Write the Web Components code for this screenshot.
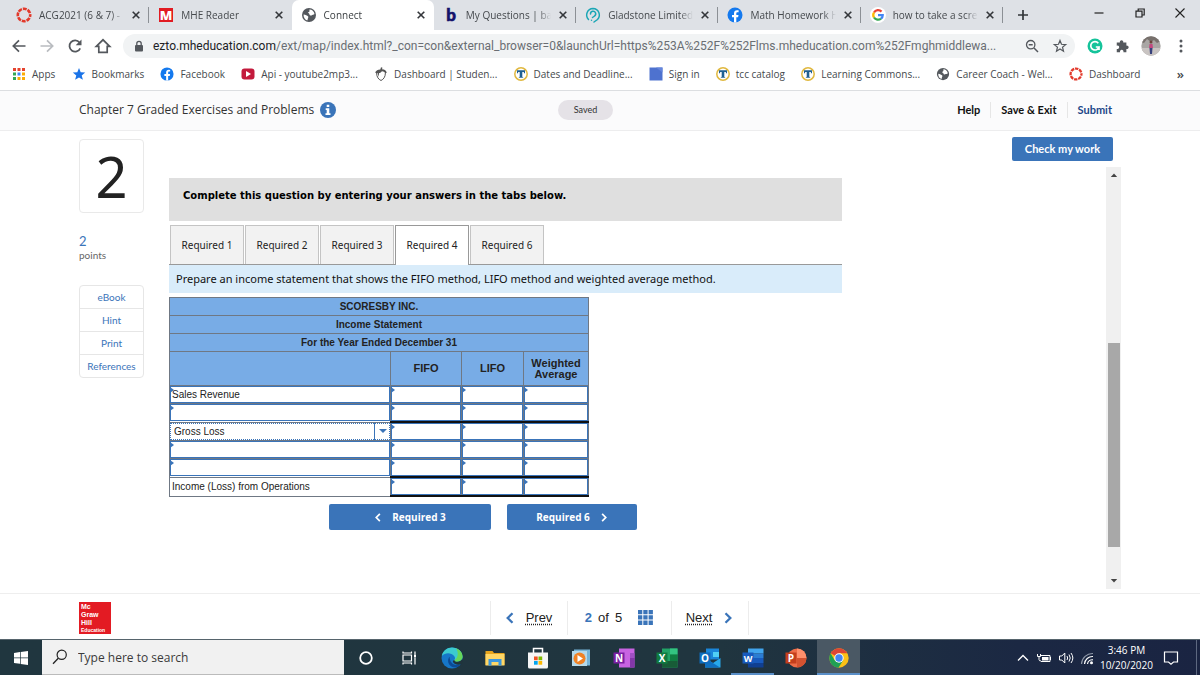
<!DOCTYPE html>
<html lang="en">
<head>
<meta charset="utf-8">
<title>Connect</title>
<style>
  html, body { margin: 0; height: 100%; }
  body {
    background: #fff;
    color: #222;
    font-family: "Open Sans", "Noto Sans", sans-serif;
    --blue: #3a74b9;
    --ui: "Open Sans", "Noto Sans", sans-serif;
    --brand: Lato, "Open Sans", sans-serif;
    --sheet: "Liberation Sans", Arial, sans-serif;
  }
</style>
</head>
<body>
<browser-window></browser-window>

<script>
const ICONS = {
  canvas: ['0 0 16 16', '<circle cx="8" cy="8" r="6.2" fill="none" stroke="#e2392b" stroke-width="2.6" stroke-dasharray="3.9 .97" stroke-dashoffset="1.9"/>'],
  mhe: ['0 0 16 16', '<path fill="#e11b22" d="M1 1h14v14H1z"/><text x="8" y="13" text-anchor="middle" font-family="Open Sans" font-weight="800" font-size="13" fill="#fff">M</text>'],
  globe: ['0 0 16 16', '<circle cx="8" cy="8" r="7" fill="#54585d"/><path fill="#fff" d="M2.6 7.6c2 .3 3.500 1 4.600 2 .4 1.200-.5 1.700-.4 2.500l-.5 1.500C4 13 2.300 10.500 2.600 7.600zM8.500 2.500c2.500 0 4.700 2 5 4.600-.8 1.200-2.200.6-3 1.300-.9.500-1.900-.2-2-1-.1-.8-1.300-.6-1.600-1.300-.2-.9 1.200-.9 1.500-1.600.3-.7-.2-1.300.1-2z"/>'],
  bartleby: ['0 0 16 16', '<text x="8" y="14" text-anchor="middle" font-family="Lato" font-weight="900" font-size="17" fill="#14126b" stroke="#14126b" stroke-width=".6">b</text>'],
  gladstone: ['0 0 16 16', '<g fill="none" stroke="#1ba6b5" stroke-width="1.500" stroke-linecap="round"><path d="M3.500 12.500A6.500 6.500 0 0 1 8 1.500a6.500 6.500 0 0 1 4.500 11L9 15"/><path d="M5.500 7A2.600 2.600 0 1 1 9.500 9L7.500 10.500"/><path d="M6.500 13.200v.1"/></g>'],
  facebook: ['0 0 16 16', '<circle cx="8" cy="8" r="7.500" fill="#1479ee"/><path fill="#fff" d="M7 15.400V10.200H5V8h2V6.300c0-2 1.200-3.100 3-3.100l1.600.1v1.900h-1c-1 0-1.300.6-1.300 1.200V8h2.200l-.4 2.200H9.300v5.200z"/>'],
  google: ['0 0 16 16', '<circle cx="8" cy="8" r="8" fill="#fff"/><g fill="none" stroke-width="2.300"><path stroke="#ea4335" d="M4 5.500A4.700 4.700 0 0 1 11.500 4.600"/><path stroke="#fbbc05" d="M4 5.500a4.800 4.800 0 0 0 0 5"/><path stroke="#34a853" d="M4 10.500a4.700 4.700 0 0 0 7 1.100"/><path stroke="#4285f4" d="M8 8.200h4.700c0 1.400-.6 2.600-1.700 3.400"/></g>'],
  apps: ['0 0 14 14', '<path fill="#e5432e" d="M1 1h3v3H1zM5.500 1h3v3h-3zM10 1h3v3h-3z"/><path fill="#34a853" d="M1 5.500h3v3H1zM1 10h3v3H1z"/><path fill="#4285f4" d="M5.500 5.500h3v3h-3z"/><path fill="#fbab04" d="M10 5.500h3v3h-3zM5.500 10h3v3h-3zM10 10h3v3h-3z"/>'],
  starfill: ['0 0 14 14', '<path fill="#1a73e8" d="M7 1l1.700 4.200 4.500.3-3.500 2.900 1.200 4.400L7 10.400l-3.900 2.400 1.200-4.400L.8 5.500l4.500-.3z"/>'],
  youtube: ['0 0 14 14', '<rect x=".5" y="1.500" width="13" height="11" rx="3" fill="#c31a3c"/><path fill="#fff" d="M5 4v6l5-3z"/>'],
  acorn: ['0 0 14 14', '<path fill="#555" d="M6.300 2.500L7 .3l1.500.5-.5 1.500c2.600.2 4.600 1.400 4.700 3.700H11c-.5-1-1.500-1.600-3-1.700L6 6H1.300C1.400 3.700 3.700 2.500 6.300 2.500z"/><path fill="none" stroke="#555" d="M2.600 6c.1 4 1.800 6.300 4.400 7.500 2.600-1.200 4.300-3.500 4.400-7.500"/><path fill="#555" d="M3 3.700l1.500 6 1-6z"/>'],
  tcc: ['0 0 14 14', '<circle cx="7" cy="7" r="6.200" fill="#fff" stroke="#e0b83f" stroke-width="1.500"/><path fill="#1f5f91" d="M3 3.200h8v3H9.900V5.100H8.300v4.600l1.200 1.100h-5l1.200-1.100V5.100H4.100v1.100H3z"/>'],
  square: ['0 0 14 14', '<path fill="#4e72cf" d="M.5.500h13v13H.5z"/><path fill="#6585db" d="M7 .5h6.500v5z"/>'],
  back: ['0 0 16 16', '<path fill="none" stroke="#54585d" stroke-width="1.700" d="M14.500 8H2.500M8 2.300L2.300 8 8 13.700"/>'],
  forward: ['0 0 16 16', '<path fill="none" stroke="#b9bcc0" stroke-width="1.700" d="M1.500 8h12M8 2.300L13.700 8 8 13.700"/>'],
  reload: ['0 0 16 16', '<path fill="none" stroke="#54585d" stroke-width="1.800" d="M13.200 10.300A5.600 5.600 0 1 1 12.500 4.500"/><path fill="#54585d" d="M14.500 1.500v5.800H8.700z"/>'],
  home: ['0 0 16 16', '<path fill="none" stroke="#54585d" stroke-width="1.700" d="M1.300 8.300L8 1.800l6.700 6.500h-2.500v6H3.800v-6z"/>'],
  lock: ['0 0 12 12', '<rect x="2" y="5" width="8" height="6.500" rx="1" fill="#54585d"/><path fill="none" stroke="#54585d" stroke-width="1.300" d="M3.800 5V3.500a2.200 2.200 0 0 1 4.400 0V5"/>'],
  zoomout: ['0 0 14 14', '<circle cx="5.700" cy="5.700" r="4.200" fill="none" stroke="#54585d" stroke-width="1.300"/><path stroke="#54585d" stroke-width="1.500" d="M9 9l4 4M3.700 5.700h4"/>'],
  star: ['0 0 14 14', '<path fill="none" stroke="#54585d" stroke-width="1.200" d="M7 1.500l1.500 3.800 4.200.3-3.200 2.600 1 4L7 10l-3.500 2.200 1-4L1.300 5.600l4.200-.3z"/>'],
  grammarly: ['0 0 16 16', '<circle cx="8" cy="8" r="7.500" fill="#15c39a"/><path fill="none" stroke="#fff" stroke-width="1.700" d="M11.300 5.200A4.200 4.200 0 1 0 12 9H8.800M12 9v3"/>'],
  puzzle: ['0 0 16 16', '<path fill="#54585d" d="M2 4h3.600a2 2 0 1 1 3.800 0H13v3.600a2 2 0 1 1 0 3.800V15H9.600a2 2 0 1 0-3.800 0H2v-3.700a2 2 0 1 0 0-3.700z"/>'],
  avatar: ['0 0 20 20', '<defs><clipPath id="c"><circle cx="10" cy="10" r="9.700"/></clipPath></defs><g clip-path="url(#c)"><path fill="#a9a6a4" d="M0 0h20v20H0z"/><path fill="#77706c" d="M0 0h20v5l-4 2-3-3-3 2-4-3-3 4-3-1z"/><path fill="#c9c4c2" d="M0 12h20v8H0z"/><circle cx="10" cy="6" r="1.500" fill="#6b443a"/><path fill="#c2497e" d="M8.500 8h3l.5 4H8z"/><path fill="#38427c" d="M8.500 12h3l-.5 6H9z"/></g>'],
  dots: ['0 0 16 16', '<g fill="#54585d"><circle cx="8" cy="3" r="1.500"/><circle cx="8" cy="8" r="1.500"/><circle cx="8" cy="13" r="1.500"/></g>'],
  close: ['0 0 10 10', '<path stroke="#33363a" stroke-width="1.600" d="M1.700 1.700l6.600 6.600M8.300 1.700L1.700 8.300"/>'],
  plus: ['0 0 12 12', '<path stroke="#33363a" stroke-width="1.700" d="M6 1v10M1 6h10"/>'],
  min: ['0 0 12 12', '<path stroke="#222" stroke-width="1.200" d="M1.500 6h9"/>'],
  restore: ['0 0 12 12', '<path fill="none" stroke="#222" stroke-width="1.200" d="M2 4.200h6V10H2zM4.200 4V2h6v6H8"/>'],
  winclose: ['0 0 12 12', '<path stroke="#222" stroke-width="1.100" d="M1.500 1.500l9 9M10.500 1.500l-9 9"/>'],
  info: ['0 0 16 16', '<circle cx="8" cy="8" r="8" fill="#3a74b9"/><path fill="#fff" d="M6.700 2.700h2.600v2.300H6.700zM5.700 6.300h3.600v4.900h1.200V13H5.500v-1.800h1.200V8h-1z"/>'],
  left: ['0 0 10 12', '<path fill="none" stroke="currentColor" stroke-width="2.300" d="M7.500 1.300L2.700 6l4.800 4.700"/>'],
  right: ['0 0 10 12', '<path fill="none" stroke="currentColor" stroke-width="2.300" d="M2.500 1.300L7.300 6l-4.800 4.700"/>'],
  grid: ['0 0 15 15', '<path fill="#3a74b9" d="M0 0h4.300v4.300H0zM5.300 0h4.300v4.300H5.300zM10.600 0h4.300v4.300h-4.300zM0 5.300h4.300v4.300H0zM5.300 5.300h4.300v4.300H5.300zM10.600 5.300h4.300v4.300h-4.300zM0 10.600h4.300v4.300H0zM5.300 10.600h4.300v4.300H5.300zM10.600 10.600h4.300v4.300h-4.300z"/>'],
  up: ['0 0 8 8', '<path fill="#444" d="M0.800 6L4 2.500 7.200 6z"/>'],
  down: ['0 0 8 8', '<path fill="#444" d="M0.800 2L4 5.500 7.200 2z"/>'],
  windows: ['0 0 16 16', '<path fill="#fff" d="M1 3l6-.9v5.500H1zM7.700 2L15 1v6.600H7.700zM1 8.300h6v5.500L1 13zM7.700 8.300H15V15l-7.300-1z"/>'],
  search: ['0 0 16 16', '<circle cx="9.700" cy="5.800" r="4.600" fill="none" stroke="#222" stroke-width="1.200"/><path stroke="#222" stroke-width="1.300" d="M6.300 9.200L1 14.700"/>'],
  cortana: ['0 0 16 16', '<circle cx="8" cy="8" r="5.800" fill="none" stroke="#fff" stroke-width="1.800"/>'],
  taskview: ['0 0 16 16', '<g fill="none" stroke="#fff" stroke-width="1.200"><path d="M2 5h8.500v6H2zM2 1.500v1.500h8.500V1.500M2 14.500V13h8.500v1.500M14 1.500V5M14 8v6.500"/></g><path fill="#fff" d="M13 5h2v2.500h-2z"/>'],
  edge: ['0 0 22 22', '<circle cx="11" cy="11" r="10.500" fill="#1677c9"/><path fill="#3ccbd0" d="M.8 9C2 3.500 6.200.5 11 .5c6 0 10.500 4.300 10.500 9 0 3.200-2.300 5.200-5 5.200-2.100 0-3.500-.8-3-1.800.7-1.200.7-2.700-.4-4C10 5.500 4 5.500.8 9z"/><path fill="#66d65a" d="M15 1.300c4 1.500 6.500 4.800 6.500 8.200 0 3.200-2.300 5.200-5 5.200-2.100 0-3.500-.8-3-1.800C17 11 18 6 15 1.300z"/><path fill="#0c4a94" d="M8.700 9.700c-3.500 3.300-1 9.500 4 10.600 2.500.5 5.500-.6 7.200-3-3.500 1.500-7 .8-9-1.300-1.600-1.700-2.400-4-2.200-6.300z"/><path fill="#20343c" d="M13.500 12.900c-.5 1 .9 1.800 3 1.800 1.800 0 3.300-.8 4.200-2.200l1.300 1.500-1.200 2.800c-3.500 1.800-7.300.7-8.700-1.500-.6-1.200.3-2.300 1.400-2.400z"/>'],
  folder: ['0 0 20 20', '<path fill="#e8a51d" d="M.5 3h7l1.500 2h10.500v12H.5z"/><path fill="#ffd766" d="M.5 6h19v11.500H.5z"/><path fill="#3b97df" d="M3.500 17.500V11h13v6.500h-3V14h-7v3.500z"/>'],
  store: ['0 0 22 22', '<path fill="none" stroke="#fff" stroke-width="1.500" d="M6.500 6V1.500h9V6"/><path fill="#f6f6f6" d="M1 5.500h20V20q0 1.500-1.500 1.500h-17Q1 21.500 1 20z"/><path fill="#f05323" d="M7 9.500h3.700v3.700H7z"/><path fill="#7fba00" d="M11.500 9.500h3.700v3.700h-3.700z"/><path fill="#00a4ef" d="M7 14h3.700v3.700H7z"/><path fill="#ffb900" d="M11.500 14h3.700v3.700h-3.700z"/>'],
  media: ['0 0 20 20', '<path fill="#75b4d8" d="M3 1.500h16v16H3z"/><path fill="#b5d9ea" d="M1 3h15v15H1z"/><circle cx="8.500" cy="10.500" r="6" fill="#f08225"/><path fill="#fff" d="M6.500 7v7l5.500-3.500z"/>'],
  onenote: ['0 0 22 20', '<path fill="#c863e2" d="M6 .5h15.500v19H6z"/><path fill="#a04fc4" d="M17 5h4.500v5H17z"/><path fill="#8337a8" d="M17 10h4.500v9.500H17z"/><path fill="#7b1fa2" d="M.5 4.500h11v11H.5z"/><text x="6" y="13.500" text-anchor="middle" font-family="Open Sans" font-weight="700" font-size="10" fill="#fff">N</text>'],
  excel: ['0 0 22 20', '<path fill="#21a366" d="M6 .5h15.500v19H6z"/><path fill="#33c481" d="M14 .5h7.500v6H14z"/><path fill="#185c37" d="M6 13h15.500v6.500H6z"/><path fill="#107c41" d="M.5 4.500h11v11H.5zM14 6.500h7.500V13H14z"/><text x="6" y="13.500" text-anchor="middle" font-family="Open Sans" font-weight="700" font-size="10" fill="#fff">X</text>'],
  outlook: ['0 0 22 20', '<path fill="#1a86d9" d="M7 .5h13v11H7z"/><path fill="#50d0f5" d="M14 4h6v5h-6z"/><path fill="#28a8ea" d="M6 10l8 5 7.500-5v9.500H6z"/><path fill="#0f6fc0" d="M6 10l15 9.500H6z"/><path fill="#0f6cbd" d="M.5 4.500h11v11H.5z"/><text x="6" y="13.500" text-anchor="middle" font-family="Open Sans" font-weight="700" font-size="10" fill="#fff">O</text>'],
  word: ['0 0 22 20', '<path fill="#41a5ee" d="M6 .5h15.500v5H6z"/><path fill="#2b7cd3" d="M6 5.500h15.500V10H6z"/><path fill="#185abd" d="M6 10h15.500v5H6z"/><path fill="#103f91" d="M6 15h15.500v4.500H6z"/><path fill="#185abd" d="M.5 4.500h11v11H.5z"/><text x="6" y="13.500" text-anchor="middle" font-family="Open Sans" font-weight="700" font-size="9" fill="#fff">W</text>'],
  powerpoint: ['0 0 22 20', '<circle cx="12" cy="10" r="9.500" fill="#ed6c47"/><path fill="#ff8f6b" d="M12 .5a9.500 9.500 0 0 1 9.500 9.500H12z"/><path fill="#d35230" d="M12 10h9.500A9.500 9.500 0 0 1 12 19.500z"/><path fill="#c43e1c" d="M.5 4.500h11v11H.5z"/><text x="6" y="13.500" text-anchor="middle" font-family="Open Sans" font-weight="700" font-size="10" fill="#fff">P</text>'],
  chrome: ['0 0 20 20', '<circle cx="10" cy="10" r="9.700" fill="#fbc116"/><path fill="#dd4535" d="M10 10L1.600 5.200A9.700 9.700 0 0 1 18.400 5.200H10z"/><path fill="#1fa055" d="M1.600 5.200A9.700 9.700 0 0 0 9.500 19.700L14 12.400 10 10 5.800 12.400z"/><circle cx="10" cy="10" r="4.700" fill="#fff"/><circle cx="10" cy="10" r="3.700" fill="#4285f4"/>'],
  chevron: ['0 0 14 14', '<path fill="none" stroke="#fff" stroke-width="1.300" d="M2 9.500L7 4.500l5 5"/>'],
  battery: ['0 0 16 14', '<path fill="none" stroke="#fff" d="M5 4.500h9v6H5M14.500 6v3M1.500 3v2.500h3V3M3 5.500v3q0 1.500 2 1.500"/><path fill="#fff" d="M6 6h6.500v3.500H6z"/>'],
  volume: ['0 0 16 14', '<g fill="none" stroke="#fff"><path d="M1.500 5h2.300l3-3v10l-3-3H1.500z"/><path d="M9 5q1.300 2 0 4M11 3.500q2.500 3.500 0 7M13 2q3.700 5 0 10"/></g>'],
  wifi: ['0 0 14 14', '<g fill="none" stroke="#8f98a8" stroke-width="1.200"><path d="M1.500 13A11 11 0 0 1 13 2.500"/></g><g fill="none" stroke="#fff" stroke-width="1.200"><path d="M4.500 13A8 8 0 0 1 13 5.500M7.500 13A5 5 0 0 1 13 8.800"/></g><circle cx="11.500" cy="11.800" r="1.500" fill="#fff"/>'],
  note: ['0 0 16 16', '<path fill="none" stroke="#fff" stroke-width="1.200" d="M1.500 2h13v10H10.500L8 14.300 5.500 12h-4z"/>'],
};

/* Base class: renders a template string into an open shadow root. */
class View extends HTMLElement {
  connectedCallback() {
    if (this.shadowRoot) return;
    const t = document.createElement('template');
    t.innerHTML = this.render();
    this.attachShadow({ mode: 'open' }).append(t.content.cloneNode(true));
  }
}
const attr = (el, name, fallback = '') => el.getAttribute(name) ?? fallback;

customElements.define('ui-icon', class extends View {
  render() {
    const [box, art] = ICONS[attr(this, 'name')];
    const [, , w, h] = box.split(' ');
    return `<style>:host{display:inline-flex;flex:none}svg{display:block;overflow:visible}</style>
      <svg aria-hidden="true" viewBox="${box}" width="${attr(this, 'w', w)}" height="${attr(this, 'h', h)}">${art}</svg>`;
  }
});

customElements.define('browser-tab', class extends View {
  render() {
    return `<style>
      :host{display:flex;align-items:center;position:relative;min-width:0;padding:0 7px 0 9px;gap:7px;color:#45494d;font-size:10px}
      :host([active]){background:#fff;border-radius:7px 7px 0 0;color:#3c4043}
      :host([divider])::after{content:"";position:absolute;right:0;top:7px;height:16px;width:1px;background:#8c9095}
      .t{flex:1;min-width:0;white-space:nowrap;overflow:hidden;-webkit-mask-image:linear-gradient(90deg,#000 85%,transparent);mask-image:linear-gradient(90deg,#000 85%,transparent)}
      button{border:0;padding:0;margin-left:-1px;background:none;width:12px;height:12px;display:grid;place-items:center}
    </style>
    <ui-icon name="${attr(this, 'icon')}" w="16" h="16"></ui-icon><span class="t"><slot></slot></span>
    <button aria-label="Close tab"><ui-icon name="close"></ui-icon></button>`;
  }
});

customElements.define('tab-strip', class extends View {
  render() {
    return `<style>
      :host{display:grid;grid-template-columns:minmax(0,1fr) 197px;height:30px;background:#dee1e6;padding-left:7px}
      .tabs{display:grid;grid-template-columns:repeat(7,minmax(0,1fr))}
      .win{display:flex;align-items:center;justify-content:space-between;padding:0 14px 4px 14px}
      button{border:0;padding:0;background:none;display:flex}
      .new{margin:4px 36px 0 0}
    </style>
    <div class="tabs">
      <browser-tab icon="canvas" divider>ACG2021 (6 &amp; 7) -</browser-tab>
      <browser-tab icon="mhe">MHE Reader</browser-tab>
      <browser-tab icon="globe" active>Connect</browser-tab>
      <browser-tab icon="bartleby" divider>My Questions | ba</browser-tab>
      <browser-tab icon="gladstone" divider>Gladstone Limited</browser-tab>
      <browser-tab icon="facebook" divider>Math Homework H</browser-tab>
      <browser-tab icon="google" divider>how to take a scre</browser-tab>
    </div>
    <div class="win">
      <button class="new" aria-label="New tab"><ui-icon name="plus"></ui-icon></button>
      <button aria-label="Minimize"><ui-icon name="min"></ui-icon></button>
      <button aria-label="Restore"><ui-icon name="restore"></ui-icon></button>
      <button aria-label="Close"><ui-icon name="winclose"></ui-icon></button>
    </div>`;
  }
});

customElements.define('address-bar', class extends View {
  render() {
    return `<style>
      :host{display:flex;align-items:center;height:32px;padding:0 11px;gap:12px}
      button{border:0;padding:0;background:none;display:flex}
      .omni{flex:1;min-width:0;display:flex;align-items:center;gap:14px;height:24px;border-radius:12px;background:#f1f3f4;padding:0 8px 0 10px}
      .url{flex:1;min-width:0;white-space:nowrap;overflow:hidden;font:12px Roboto,sans-serif;color:#6a6e73;margin-left:-6px}
      .url b{font-weight:400;color:#202124}
    </style>
    <button aria-label="Back"><ui-icon name="back"></ui-icon></button>
    <button aria-label="Forward"><ui-icon name="forward"></ui-icon></button>
    <button aria-label="Reload"><ui-icon name="reload"></ui-icon></button>
    <button aria-label="Home"><ui-icon name="home"></ui-icon></button>
    <div class="omni"><ui-icon name="lock"></ui-icon>
      <span class="url"><b>ezto.mheducation.com</b>/ext/map/index.html?_con=con&amp;external_browser=0&amp;launchUrl=https%253A%252F%252Flms.mheducation.com%252Fmghmiddlewa...</span>
      <ui-icon name="zoomout"></ui-icon><ui-icon name="star"></ui-icon>
    </div>
    <ui-icon name="grammarly"></ui-icon><ui-icon name="puzzle" w="14" h="14"></ui-icon><ui-icon name="avatar"></ui-icon>
    <button aria-label="Menu"><ui-icon name="dots"></ui-icon></button>`;
  }
});

customElements.define('bookmark-link', class extends View {
  render() {
    return `<style>:host{display:block;font-size:10px}a{display:flex;align-items:center;gap:6px;color:#45494d;text-decoration:none;white-space:nowrap}</style>
    <a href="#"><ui-icon name="${attr(this, 'icon')}" w="14" h="14"></ui-icon><span><slot></slot></span></a>`;
  }
});

customElements.define('bookmark-bar', class extends View {
  render() {
    return `<style>:host{display:flex;align-items:center;justify-content:space-between;height:29px;padding:0 16px 4px 12px;border-bottom:1px solid #dcdee1;box-sizing:border-box}
      .more{font-size:13px;font-weight:600;color:#45494d;margin-left:20px}</style>
      <bookmark-link icon="apps">Apps</bookmark-link>
      <bookmark-link icon="starfill">Bookmarks</bookmark-link>
      <bookmark-link icon="facebook">Facebook</bookmark-link>
      <bookmark-link icon="youtube">Api - youtube2mp3...</bookmark-link>
      <bookmark-link icon="acorn">Dashboard | Studen...</bookmark-link>
      <bookmark-link icon="tcc">Dates and Deadline...</bookmark-link>
      <bookmark-link icon="square">Sign in</bookmark-link>
      <bookmark-link icon="tcc">tcc catalog</bookmark-link>
      <bookmark-link icon="tcc">Learning Commons...</bookmark-link>
      <bookmark-link icon="globe">Career Coach - Wel...</bookmark-link>
      <bookmark-link icon="canvas">Dashboard</bookmark-link>
      <span class="more">»</span>`;
  }
});

customElements.define('assignment-header', class extends View {
  render() {
    return `<style>
      :host{display:grid;grid-template-columns:1fr auto 1fr;align-items:center;height:37px;padding:0 88px 2px 79px;background:#fbfbfc;border-bottom:1px solid #ededee;font-family:var(--brand)}
      .title{display:flex;align-items:center;gap:6px;font:12px var(--ui);color:#333;margin:0;white-space:nowrap}
      .saved{font-size:9px;line-height:20px;padding:0 16px;border-radius:10px;background:#e5e2e7;color:#333;margin-right:20px}
      nav{display:flex;justify-content:flex-end;font-size:11px;font-weight:700}
      nav a{color:#111;text-decoration:none;line-height:16px;padding:0 10px;border-left:1px solid #e6e6e6}
      nav a:first-child{border:0}
      nav a:last-child{color:#1d4789;padding-right:0}
    </style>
    <h1 class="title">Chapter 7 Graded Exercises and Problems <ui-icon name="info"></ui-icon></h1>
    <span class="saved">Saved</span>
    <nav><a href="#">Help</a><a href="#">Save &amp; Exit</a><a href="#">Submit</a></nav>`;
  }
});

customElements.define('question-rail', class extends View {
  render() {
    return `<style>
      :host{display:block;font-family:var(--brand)}
      .num{height:72px;border:1px solid #e9e9e9;border-radius:4px;display:grid;place-items:center;font:56px/72px "Noto Sans",sans-serif;color:#222}
      .pts{margin:21px 0 23px;font-size:10px;line-height:14px;color:#666}
      .pts b{display:block;font-weight:400;font-size:13px;color:var(--blue)}
      ul{list-style:none;margin:0;padding:0;border:1px solid #e6e6e6;border-radius:4px}
      li+li{border-top:1px solid #e6e6e6}
      a{display:block;text-align:center;font-size:10px;line-height:22px;color:var(--blue);text-decoration:none}
    </style>
    <div class="num">2</div>
    <div class="pts"><b>2</b>points</div>
    <ul><li><a href="#">eBook</a></li><li><a href="#">Hint</a></li><li><a href="#">Print</a></li><li><a href="#">References</a></li></ul>`;
  }
});

customElements.define('answer-cell', class extends View {
  render() {
    return `<style>
      :host{display:block;position:relative}
      input{display:block;box-sizing:border-box;width:100%;height:17px;border:1px solid var(--blue);background:#fff;padding:0 0 0 1px;margin:0;font:10px var(--sheet);color:#222;outline:0}
      :host::after{content:"";position:absolute;left:0;top:1px;border:3px solid transparent;border-left:4px solid var(--blue);border-right:0}
    </style><input aria-label="${attr(this, 'label')}" value="${attr(this, 'value')}">`;
  }
});

customElements.define('income-table', class extends View {
  render() {
    const nums = l => ['FIFO', 'LIFO', 'Weighted Average'].map(c => `<td class="n"><answer-cell label="${l} ${c}"></answer-cell></td>`).join('');
    const entry = (l, v = '') => `<td><answer-cell label="${l}" value="${v}"></answer-cell></td>`;
    return `<style>
      :host{display:block;width:420px;font:10px/12px var(--sheet);color:#222}
      table{border-collapse:collapse;table-layout:fixed;width:100%}
      th,td{border:1px solid #6f7884;padding:0;box-sizing:border-box}
      td{height:18px}
      th{background:#78ace6;height:18px;font-size:10px;font-weight:700}
      .cols th{height:34px;line-height:11px;font-size:11px}
      .total td.n{border-bottom:2px solid #111}
      .label{padding-left:2px}
      .pick{position:relative}
      select{appearance:none;display:block;width:100%;height:17px;border:1px dotted var(--blue);background:#fff;font:10px var(--sheet);color:#222;padding:0 3px;margin:0;border-radius:0}
      .arrow{position:absolute;right:0;top:0;bottom:0;width:15px;border-left:1px solid var(--blue);display:grid;place-items:center;pointer-events:none}
      .arrow::after{content:"";border:4px solid transparent;border-top-color:var(--blue);border-bottom:0}
    </style>
    <table>
      <colgroup><col style="width:221px"><col style="width:71px"><col style="width:62px"><col></colgroup>
      <thead>
        <tr><th colspan="4">SCORESBY INC.</th></tr>
        <tr><th colspan="4">Income Statement</th></tr>
        <tr><th colspan="4">For the Year Ended December 31</th></tr>
        <tr class="cols"><th></th><th>FIFO</th><th>LIFO</th><th>Weighted Average</th></tr>
      </thead>
      <tbody>
        <tr>${entry('Line 1', 'Sales Revenue')}${nums('Sales Revenue')}</tr>
        <tr class="total">${entry('Line 2')}${nums('Line 2')}</tr>
        <tr><td class="pick"><select aria-label="Line 3"><option>Gross Loss</option><option>Gross Profit</option></select><span class="arrow"></span></td>${nums('Gross Loss')}</tr>
        <tr>${entry('Line 4')}${nums('Line 4')}</tr>
        <tr class="total">${entry('Line 5')}${nums('Line 5')}</tr>
        <tr class="total"><td class="label">Income (Loss) from Operations</td>${nums('Income')}</tr>
      </tbody>
    </table>`;
  }
});

customElements.define('question-panel', class extends View {
  render() {
    return `<style>
      :host{display:block;padding-top:11px}
      .sheet{max-width:673px}
      .banner{margin:0;background:#dfdfdf;padding:11px 14px 18px;font:bold 10px/14px "DejaVu Sans",sans-serif;color:#000}
      .tabs{display:flex;gap:1px;padding:4px 1px 0;border-bottom:1px solid #999}
      .tabs button{flex:0 0 74px;height:39px;box-sizing:border-box;white-space:nowrap;border:1px solid #c4c4c4;border-bottom:0;background:#f2f2f2;font:10px "Noto Sans",sans-serif;color:#222;padding:0}
      .tabs button[aria-selected=true]{background:#fff;border-color:#999;margin-bottom:-1px;height:40px;padding-bottom:1px}
      .ask{margin:0 0 4px;padding:6px 7px 7px;background:#d9ecfa;font:11px/15px "Noto Sans",sans-serif;color:#111}
      .steps{display:flex;gap:16px;margin:7px 0 0 160px}
      .steps button{display:flex;align-items:center;justify-content:center;gap:10px;height:26px;border:0;border-radius:2px;background:var(--blue);color:#fff;font:bold 10px var(--ui)}
      .prev{width:162px}.next{width:130px}
    </style>
    <div class="sheet">
      <p class="banner">Complete this question by entering your answers in the tabs below.</p>
      <div class="tabs" role="tablist">
        <button role="tab">Required 1</button><button role="tab">Required 2</button><button role="tab">Required 3</button><button role="tab" aria-selected="true">Required 4</button><button role="tab">Required 6</button>
      </div>
      <p class="ask">Prepare an income statement that shows the FIFO method, LIFO method and weighted average method.</p>
      <income-table></income-table>
      <div class="steps">
        <button class="prev"><ui-icon name="left" w="8" h="9"></ui-icon>Required 3</button>
        <button class="next">Required 6<ui-icon name="right" w="8" h="9"></ui-icon></button>
      </div>
    </div>`;
  }
});

customElements.define('scroll-track', class extends View {
  render() {
    return `<style>
      :host{display:flex;flex-direction:column;align-items:center;justify-content:space-between;background:#f0f0f0;padding:4px 0}
      .rail{flex:1;width:12px;display:grid;grid-template-rows:164fr 204fr 30fr}
      .thumb{grid-row:2;background:#a8a8a8}
    </style><ui-icon name="up"></ui-icon><div class="rail"><div class="thumb"></div></div><ui-icon name="down"></ui-icon>`;
  }
});

customElements.define('assignment-body', class extends View {
  render() {
    return `<style>
      :host{display:grid;grid-template-columns:65px minmax(0,1fr) 15px;grid-template-rows:auto 1fr;column-gap:25px;padding:6px 79px 4px;flex:1}
      question-rail{grid-row:1/3;margin-top:2px}
      .check{grid-column:2/4;justify-self:end;margin:0 8px 6px 0;height:24px;width:101px;border:0;border-radius:2px;background:var(--blue);color:#fff;font:bold 11px var(--brand);padding:0 0 2px}
    </style>
    <question-rail></question-rail>
    <button class="check">Check my work</button>
    <question-panel></question-panel>
    <scroll-track></scroll-track>`;
  }
});

customElements.define('question-pager', class extends View {
  render() {
    return `<style>
      :host{display:flex;align-items:center;height:46px;padding:2px 73px 0 79px;border-top:1px solid #eee;box-sizing:border-box}
      .logo{width:32px;height:32px;box-sizing:border-box;background:#e31b23;color:#fff;padding:1px 0 0 2px;font:bold 7px/8px var(--sheet)}
      .logo span{display:block}
      .logo small{display:block;font-size:5px;line-height:6px}
      nav{display:flex;margin:0 auto;font:13px/34px var(--sheet)}
      .c{display:flex;align-items:center;justify-content:center;gap:11px;border-left:1px solid #ececec;width:76px;color:var(--blue);white-space:nowrap}
      .mid{width:103px;gap:16px}.last{border-right:1px solid #ececec}
      a{color:#222;text-decoration:underline dotted;text-underline-offset:2px}
      .of{color:#222;display:flex;gap:6px}.of b{color:var(--blue)}
    </style>
    <div class="logo"><span>Mc</span><span>Graw</span><span>Hill</span><small>Education</small></div>
    <nav>
      <div class="c"><ui-icon name="left"></ui-icon><a href="#">Prev</a></div>
      <div class="c mid"><span class="of"><b>2</b><span>of</span><span>5</span></span><ui-icon name="grid"></ui-icon></div>
      <div class="c last"><a href="#">Next</a><ui-icon name="right"></ui-icon></div>
    </nav>`;
  }
});

customElements.define('task-button', class extends View {
  render() {
    return `<style>:host{display:block;width:43px}button{width:100%;height:100%;box-sizing:border-box;border:0;border-top:2px solid transparent;border-bottom:2px solid transparent;padding:0;background:none;display:grid;place-items:center}
      :host([open]) button{border-bottom-color:#5a8fc8}
      :host([active]) button{background:#4a5864;border-top-color:#4a5864}</style>
      <button aria-label="${attr(this, 'label')}"><ui-icon name="${attr(this, 'icon')}"></ui-icon></button>`;
  }
});

customElements.define('task-bar', class extends View {
  render() {
    return `<style>
      :host{display:flex;height:36px;background:linear-gradient(90deg,#20363f 0%,#20353f 60%,#1b2843 85%,#1a2442 100%);color:#fff;border-top:1px solid #56646c;box-sizing:border-box}
      .box{display:flex;align-items:center;gap:10px;width:302px;box-sizing:border-box;background:#f1f1f1;border-bottom:1px solid #bbb;padding-left:10px}
      input{border:0;background:none;outline:0;padding:0;flex:1;min-width:0;font:12px var(--ui);color:#333}
      input::placeholder{color:#3a3a3a;opacity:1}
      .start{width:42px}
      .tray{margin-left:auto;display:flex;align-items:center;gap:6px;padding-right:3px}
      time{font-size:10px;line-height:15px;text-align:center}
      .note{margin:0 11px 0 4px}
      .peek{width:1px;align-self:stretch;background:#5d6880}
    </style>
    <task-button class="start" icon="windows" label="Start"></task-button>
    <label class="box"><ui-icon name="search"></ui-icon><input placeholder="Type here to search" aria-label="Search"></label>
    <task-button icon="cortana" label="Cortana"></task-button>
    <task-button icon="taskview" label="Task View"></task-button>
    <task-button icon="edge" label="Edge"></task-button>
    <task-button icon="folder" label="File Explorer"></task-button>
    <task-button icon="store" label="Store"></task-button>
    <task-button icon="media" label="Media Player"></task-button>
    <task-button icon="onenote" label="OneNote"></task-button>
    <task-button icon="excel" label="Excel"></task-button>
    <task-button icon="outlook" label="Outlook"></task-button>
    <task-button icon="word" label="Word" open></task-button>
    <task-button icon="powerpoint" label="PowerPoint"></task-button>
    <task-button icon="chrome" label="Chrome" open active></task-button>
    <div class="tray">
      <ui-icon name="chevron"></ui-icon><ui-icon name="battery"></ui-icon><ui-icon name="volume"></ui-icon><ui-icon name="wifi"></ui-icon>
      <time>3:46 PM<br>10/20/2020</time>
      <ui-icon class="note" name="note"></ui-icon><span class="peek"></span>
    </div>`;
  }
});

customElements.define('browser-window', class extends View {
  render() {
    return `<style>:host{display:flex;flex-direction:column;min-height:100%}</style>
      <tab-strip></tab-strip><address-bar></address-bar><bookmark-bar></bookmark-bar>
      <assignment-header></assignment-header><assignment-body></assignment-body>
      <question-pager></question-pager><task-bar></task-bar>`;
  }
});
</script>
</body>
</html>
